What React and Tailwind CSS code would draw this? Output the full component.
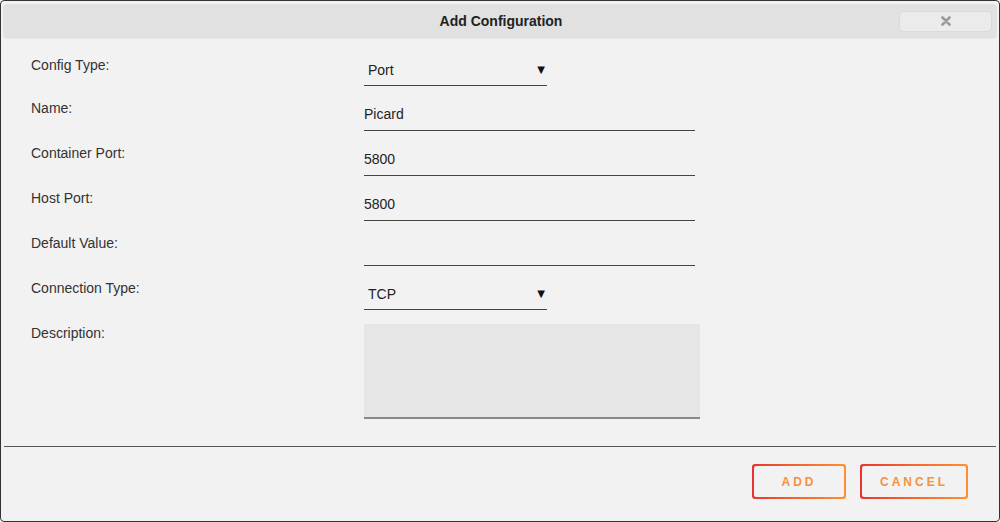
import React from 'react';

const font = { fontFamily: '"Liberation Sans", Arial, sans-serif' };

const Label = ({ children }) => (
  <div className="w-[333px] shrink-0 text-[14px] leading-5 text-[#333]">{children}</div>
);

const TextField = ({ value }) => (
  <div className="mt-[6px] box-border h-[27px] w-[331px] border-b border-[#444] pb-[5px] text-[14px] leading-5 text-[#222]">
    {value}
  </div>
);

const SelectField = ({ value, top }) => (
  <div className={`${top} flex w-[183px] items-center justify-between border-b border-[#444] pb-[5px] pl-[4px] pr-[2px] text-[14px] leading-5 text-[#222]`}>
    <span>{value}</span>
    <span className="text-[10px] leading-5 text-[#111]" style={{ fontFamily: '"DejaVu Sans", sans-serif' }}>▼</span>
  </div>
);

const App = () => {
  return (
    <div className="h-[522px] w-[1000px] bg-white" style={font}>
      <div className="flex h-full flex-col rounded-[4px] border border-[#333] bg-[#f2f2f2] px-[2px] pt-[3px]">
        {/* Header */}
        <div className="flex h-[34px] items-center rounded-[4px] bg-[#e1e1e1] shadow-[0_1px_1px_rgba(0,0,0,0.05)]">
          <div className="flex-1 pl-[100px] text-center text-[14px] font-bold text-[#222]">Add Configuration</div>
          <button className="mr-[5px] flex h-[21px] w-[93px] items-center justify-center rounded-[4px] border border-[#dadada] bg-[#ebebeb]">
            <svg width="10" height="10" viewBox="0 0 10 10">
              <path d="M1.5 1.5 L8.5 8.5 M8.5 1.5 L1.5 8.5" stroke="#9a9a9a" strokeWidth="2.6" strokeLinecap="round" />
            </svg>
          </button>
        </div>

        {/* Form */}
        <div className="flex flex-col pl-[28px] pt-[17px]">
          <div className="flex h-[43px] items-start">
            <Label>Config Type:</Label>
            <SelectField value="Port" top="mt-[5px]" />
          </div>
          <div className="flex h-[45px] items-start">
            <Label>Name:</Label>
            <TextField value="Picard" />
          </div>
          <div className="flex h-[45px] items-start">
            <Label>Container Port:</Label>
            <TextField value="5800" />
          </div>
          <div className="flex h-[45px] items-start">
            <Label>Host Port:</Label>
            <TextField value="5800" />
          </div>
          <div className="flex h-[45px] items-start">
            <Label>Default Value:</Label>
            <TextField value="" />
          </div>
          <div className="flex h-[45px] items-start">
            <Label>Connection Type:</Label>
            <SelectField value="TCP" top="mt-[6px]" />
          </div>
          <div className="flex items-start">
            <Label>Description:</Label>
            <div className="mt-[1px] h-[95px] w-[336px] border-b-2 border-[#8a8a8a] bg-[#e6e6e6]" />
          </div>
        </div>

        {/* Divider */}
        <div className="mx-[1px] mt-[27px] h-px bg-[#555]" />

        {/* Footer */}
        <div className="flex justify-end gap-[14px] pr-[29px] pt-[17px]">
          <button className="rounded-[3px] bg-gradient-to-r from-[#e8322f] to-[#ff8f2e] p-[2px]">
            <div className="flex h-[31px] w-[90px] items-center justify-center rounded-[2px] bg-[#f2f2f2] text-[12px] font-bold tracking-[3px] text-[#f6913c]">
              ADD
            </div>
          </button>
          <button className="rounded-[3px] bg-gradient-to-r from-[#e8322f] to-[#ff8f2e] p-[2px]">
            <div className="flex h-[31px] w-[104px] items-center justify-center rounded-[2px] bg-[#f2f2f2] text-[12px] font-bold tracking-[3px] text-[#f6913c]">
              CANCEL
            </div>
          </button>
        </div>
      </div>
    </div>
  );
};

export default App;
